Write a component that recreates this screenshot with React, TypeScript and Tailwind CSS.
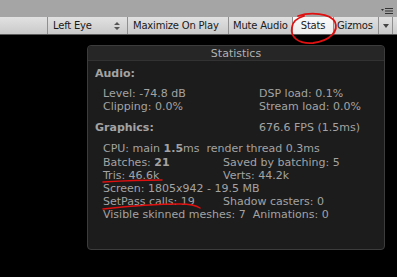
import React from "react";

const font = { fontFamily: '"DejaVu Sans", Verdana, sans-serif' };

function Btn({ label, w, active, children }: { label?: string; w: string; active?: boolean; children?: React.ReactNode }) {
  return (
    <div
      className={`h-full shrink-0 flex items-center border-l border-[#8f8f8f] text-[10px] tracking-[-0.2px] whitespace-nowrap text-[#1a1a1a] ${w} ${
        active ? "bg-gradient-to-b from-[#fafafa] to-[#ececec]" : ""
      }`}
    >
      {label}
      {children}
    </div>
  );
}

function Line({ children, className = "" }: { children: React.ReactNode; className?: string }) {
  return <div className={`h-[13px] leading-[13px] whitespace-pre ${className}`}>{children}</div>;
}

function Row({ l, r, rx = "w-[120px]" }: { l: React.ReactNode; r: React.ReactNode; rx?: string }) {
  return (
    <div className="flex h-[13px] leading-[13px] whitespace-pre">
      <div className={rx}>{l}</div>
      <div>{r}</div>
    </div>
  );
}

export default function App() {
  return (
    <div className="relative w-[397px] h-[277px] bg-black overflow-hidden" style={font}>
      <div className="h-[17px] bg-[#a5a5a5] flex justify-end items-end pr-[4px] pb-[3px]">
        <svg width="12" height="6" viewBox="0 0 12 6">
          <path d="M0 1h3L1.5 3z" fill="#333" />
          <rect x="4" y="0" width="8" height="1" fill="#333" />
          <rect x="4" y="2.5" width="8" height="1" fill="#333" />
          <rect x="4" y="5" width="8" height="1" fill="#333" />
        </svg>
      </div>
      <div className="h-[18px] flex bg-gradient-to-b from-[#e2e2e2] to-[#c9c9c9] border-b border-[#5a5a5a] pr-[5px]">
        <div className="w-[47px] shrink-0" />
        <Btn w="w-[80px] px-[5px] justify-between" label="Left Eye">
          <svg width="6" height="8" viewBox="0 0 6 8" className="mr-[2px]">
            <path d="M0 3L3 0L6 3z M0 5L3 8L6 5z" fill="#555" />
          </svg>
        </Btn>
        <Btn w="w-[101px] px-[5px]" label="Maximize On Play" />
        <Btn w="w-[64px] px-[4px]" label="Mute Audio" />
        <Btn w="w-[41px] justify-center" label="Stats" active />
        <Btn w="w-[45px] px-[3px]" label="Gizmos" />
        <div className="h-full w-[14px] shrink-0 border-l border-[#8f8f8f] flex items-center justify-center">
          <svg width="6" height="4" viewBox="0 0 6 4">
            <path d="M0 0h6L3 4z" fill="#444" />
          </svg>
        </div>
        <div className="h-full border-l border-[#8f8f8f]" />
      </div>

      <div className="ml-[87px] mt-[10px] w-[298px] h-[205px] rounded-[4px] border border-[#3c3c3c] bg-[#1c1c1c] text-[11px] text-[#a3a3a3]">
        <div className="h-[15px] leading-[15px] bg-[#262626] border-b border-[#323232] text-center text-[#b2b2b2] rounded-t-[4px]">
          Statistics
        </div>
        <div className="pl-[7px] pt-[6px]">
          <Line className="font-bold">Audio:</Line>
          <div className="pl-[8px] mt-[7px]">
            <Row rx="w-[156px]" l="Level: -74.8 dB" r="DSP load: 0.1%" />
            <Row rx="w-[156px]" l="Clipping: 0.0%" r="Stream load: 0.0%" />
          </div>
          <div className="flex h-[13px] leading-[13px] mt-[8px]">
            <div className="w-[164px] font-bold">Graphics:</div>
            <div>676.6 FPS (1.5ms)</div>
          </div>
          <div className="pl-[8px] mt-[8px]">
            <Line className="h-[14px]">
              CPU: main <b>1.5</b>ms  render thread 0.3ms
            </Line>
            <Row
              l={
                <>
                  Batches: <b>21</b>
                </>
              }
              r="Saved by batching: 5"
            />
            <Row l="Tris: 46.6k" r="Verts: 44.2k" />
            <Line>Screen: 1805x942 - 19.5 MB</Line>
            <Row l="SetPass calls: 19" r="Shadow casters: 0" />
            <Line>Visible skinned meshes: 7  Animations: 0</Line>
          </div>
        </div>
      </div>

      <svg className="absolute left-0 top-0 pointer-events-none" width="397" height="277" viewBox="0 0 397 277" fill="none">
        <path
          d="M298 16 C 310 12, 330 13, 335 22 C 339 31, 330 41, 313 43 C 298 44, 290 37, 292 27 C 293 21, 297 18, 304 16"
          stroke="#e01010"
          strokeWidth="1.8"
          strokeLinecap="round"
        />
        <path d="M103 182 C 120 181, 140 180, 162 180" stroke="#e01010" strokeWidth="1.5" strokeLinecap="round" />
        <path d="M103 209 C 130 206, 160 204, 180 204 C 190 204, 197 206, 200 208" stroke="#e01010" strokeWidth="1.5" strokeLinecap="round" />
      </svg>
    </div>
  );
}
